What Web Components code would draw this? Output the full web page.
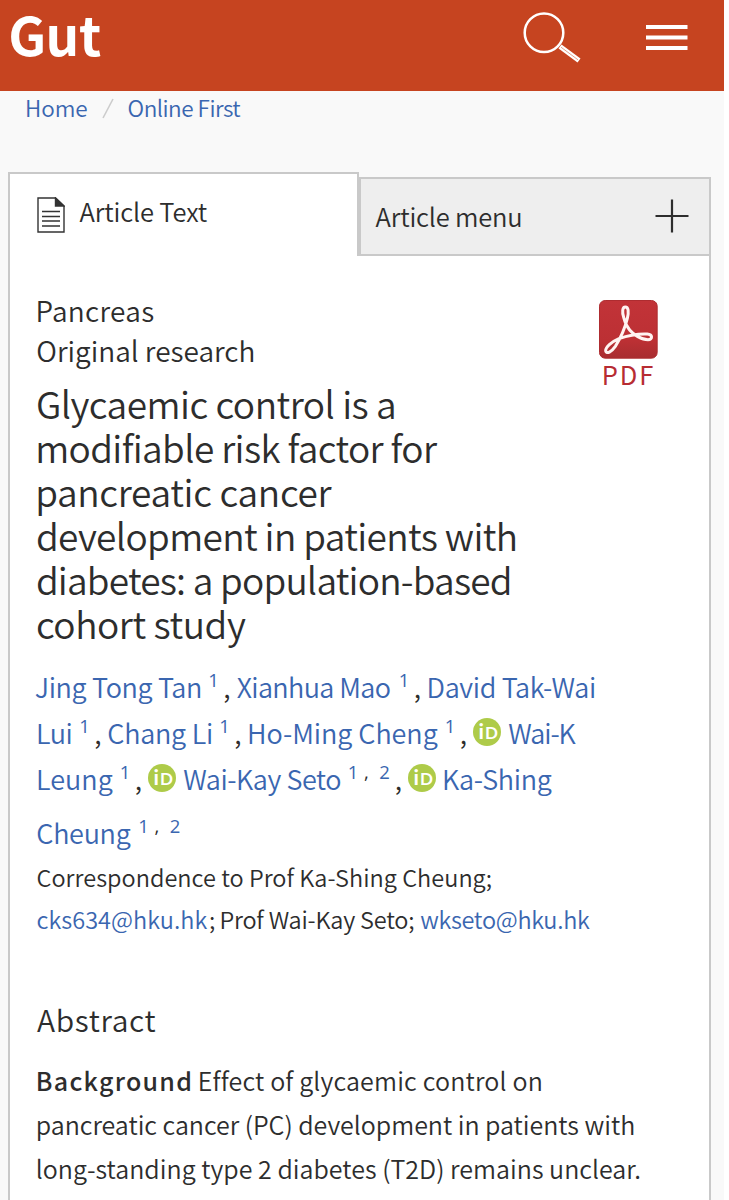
<!DOCTYPE html>
<html lang="en">
<head>
<meta charset="utf-8">
<title>Gut</title>
<style>
  body {
    background: #ffffff;
    color: #2d2d2d;
    font-family: "Noto Sans CJK SC", "Open Sans", sans-serif;
    font-weight: 350;
    margin: 0;
    --link-color: #3a66b0;
    --line-color: #c9c9c9;
  }

  gut-page {
    height: 1200px;
  }

  ink-text[link] {
    color: var( --link-color );
  }
</style>
</head>
<body>
<gut-page>
  <gut-header></gut-header>
  <gut-breadcrumb>
    <ink-text link gap="0.5" w="61">Home</ink-text>
    <ink-text link gap="0.5" w="113">Online First</ink-text>
  </gut-breadcrumb>
  <gut-panel>
    <ink-text slot="active" w="128.5">Article Text</ink-text>
    <ink-text slot="menu" w="146">Article menu</ink-text>
    <gut-pdf slot="aside"></gut-pdf>
    <text-row size="28" line="40"><ink-text gap="0.5" w="116.5">Pancreas</ink-text></text-row>
    <text-row size="28" line="40"><ink-text w="217">Original research</ink-text></text-row>
    <text-row size="37" line="44" before="11"><ink-text w="357.5">Glycaemic control is a</ink-text></text-row>
    <text-row size="37" line="44"><ink-text gap="1" w="400">modifiable risk factor for</ink-text></text-row>
    <text-row size="37" line="44"><ink-text gap="1" w="294.5">pancreatic cancer</ink-text></text-row>
    <text-row size="37" line="44"><ink-text w="479">development in patients with</ink-text></text-row>
    <text-row size="37" line="44"><ink-text w="473">diabetes: a population-based</ink-text></text-row>
    <text-row size="37" line="44"><ink-text w="209">cohort study</ink-text></text-row>

    <text-row size="27" line="46" before="19">
      <ink-text link gap="-2" w="166">Jing Tong Tan</ink-text>
      <ink-text link sup gap="8" w="7">1</ink-text>
      <ink-text gap="8" w="5">,</ink-text>
      <ink-text link gap="7.5" w="154">Xianhua Mao</ink-text>
      <ink-text link sup gap="9" w="7">1</ink-text>
      <ink-text gap="8" w="5">,</ink-text>
      <ink-text link gap="9" w="166.5">David Tak-Wai</ink-text>
    </text-row>
    <text-row size="27" line="46">
      <ink-text link gap="1" w="33.5">Lui</ink-text>
      <ink-text link sup gap="8.5" w="7">1</ink-text>
      <ink-text gap="8" w="5">,</ink-text>
      <ink-text link gap="8" w="104">Chang Li</ink-text>
      <ink-text link sup gap="8" w="7">1</ink-text>
      <ink-text gap="8" w="5">,</ink-text>
      <ink-text link gap="9" w="189">Ho-Ming Cheng</ink-text>
      <ink-text link sup gap="7.5" w="7">1</ink-text>
      <ink-text gap="8" w="5">,</ink-text>
      <orcid-icon></orcid-icon>
      <ink-text link gap="7" w="68.5">Wai-K</ink-text>
    </text-row>
    <text-row size="27" line="46">
      <ink-text link gap="1" w="75">Leung</ink-text>
      <ink-text link sup gap="7.5" w="7">1</ink-text>
      <ink-text gap="8" w="5">,</ink-text>
      <orcid-icon></orcid-icon>
      <ink-text link gap="7" w="158">Wai-Kay Seto</ink-text>
      <ink-text link sup gap="7.5" w="7">1</ink-text>
      <ink-text sup gap="8.5" w="3">,</ink-text>
      <ink-text link sup gap="12.5" w="9">2</ink-text>
      <ink-text gap="7" w="5">,</ink-text>
      <orcid-icon></orcid-icon>
      <ink-text link gap="8" w="108">Ka-Shing</ink-text>
    </text-row>
    <text-row size="27" line="46" before="8">
      <ink-text link w="94">Cheung</ink-text>
      <ink-text link sup gap="8" w="7">1</ink-text>
      <ink-text sup gap="8.5" w="3">,</ink-text>
      <ink-text link sup gap="12.5" w="9">2</ink-text>
    </text-row>

    <text-row size="23.5" line="42"><ink-text w="454.5">Correspondence to Prof Ka-Shing Cheung;</ink-text></text-row>
    <text-row size="23.5" line="42">
      <ink-text link w="171">cks634@hku.hk</ink-text>
      <ink-text gap="1.5" w="4">;</ink-text>
      <ink-text gap="7.5" w="193">Prof Wai-Kay Seto;</ink-text>
      <ink-text link gap="6" w="170.5">wkseto@hku.hk</ink-text>
    </text-row>

    <text-row size="30" line="40" before="59"><ink-text gap="-0.5" w="119.5">Abstract</ink-text></text-row>
    <text-row size="25" line="44" before="19">
      <ink-text strong gap="0.5" w="153">Background</ink-text>
      <ink-text gap="9" w="342">Effect of glycaemic control on</ink-text>
    </text-row>
    <text-row size="25" line="44"><ink-text gap="0.5" w="596.5">pancreatic cancer (PC) development in patients with</ink-text></text-row>
    <text-row size="25" line="44"><ink-text gap="0.5" w="602.5">long-standing type 2 diabetes (T2D) remains unclear.</ink-text></text-row>
  </gut-panel>
</gut-page>

<script>
// Shared setup
class GutElement extends HTMLElement {
  constructor( markup ) {
    super();

    const template = document.createElement( 'template' );
    template.innerHTML = markup;

    this.attachShadow( {mode: 'open'} );
    this.shadowRoot.appendChild( template.content.cloneNode( true ) );
  }
}

const context = document.createElement( 'canvas' ).getContext( '2d' );

// Measure large, scale down
// Bounds of small text are rounded to whole pixels
const MEASURE_SCALE = 16;

// Room at each side for smoothed edges
const EDGE = 0.6;

// A run of text whose inked edges fill the given width
class InkText extends GutElement {
  constructor() {
    super( /* template */ `
      <style>
        :host {
          display: block;
          flex: none;
        }

        :host( [sup] ) {
          font-family: "Open Sans", sans-serif;
          font-size: 18.5px;
          font-weight: 400;
          line-height: 1;
          transform: translateY( -11px );
        }

        :host( [strong] ) {
          font-weight: 500;
        }

        span {
          display: block;
          font-kerning: normal;
          white-space: pre;
        }
      </style>
      <span><slot></slot></span>
    ` );

    this.$run = this.shadowRoot.querySelector( 'span' );
  }

  connectedCallback() {
    this._render();
  }

  _render() {
    const style = getComputedStyle( this );
    const text = this.textContent;
    const width = parseFloat( this.getAttribute( 'w' ) );
    const size = parseFloat( style.fontSize ) * MEASURE_SCALE;

    context.font = `${style.fontWeight} ${size}px ${style.fontFamily}`;
    context.letterSpacing = '0.001px';

    const ink = context.measureText( text );
    const left = ink.actualBoundingBoxLeft / MEASURE_SCALE;
    const natural = left + ink.actualBoundingBoxRight / MEASURE_SCALE;

    this.style.width = `${width}px`;
    this.style.marginLeft = `${this.getAttribute( 'gap' ) || 0}px`;
    this.$run.style.marginLeft = `${left + EDGE}px`;

    if( text.length > 1 ) {
      this.$run.style.letterSpacing = `${( width - EDGE * 2 - natural ) / ( text.length - 1 )}px`;
    }
  }
}

class TextRow extends GutElement {
  constructor() {
    super( /* template */ `
      <style>
        :host {
          align-items: baseline;
          display: flex;
        }
      </style>
      <slot></slot>
    ` );
  }

  connectedCallback() {
    const line = this.getAttribute( 'line' );

    this.style.fontSize = `${this.getAttribute( 'size' )}px`;
    this.style.lineHeight = `${line}px`;
    this.style.height = `${line}px`;
    this.style.marginTop = `${this.getAttribute( 'before' ) || 0}px`;
  }
}

class OrcidIcon extends GutElement {
  constructor() {
    super( /* template */ `
      <style>
        :host {
          align-self: flex-start;
          display: block;
          flex: none;
          height: 28px;
          margin-left: 7.5px;
          margin-top: 8px;
          width: 28px;
        }

        svg {
          display: block;
        }

        text {
          fill: #ffffff;
          font-family: Lato, sans-serif;
          font-weight: 700;
        }
      </style>
      <svg width="28" height="28" viewBox="0 0 28 28">
        <circle cx="14" cy="14" r="14" fill="#aecb49"/>
        <text x="5.6" y="20.6" font-size="21.5">i</text>
        <text x="12" y="20.6" font-size="17">D</text>
      </svg>
    ` );
  }
}

class GutPdf extends GutElement {
  constructor() {
    super( /* template */ `
      <style>
        :host {
          align-items: center;
          color: #b72c33;
          display: flex;
          flex-direction: column;
          font-size: 25.5px;
          font-weight: 400;
          line-height: 30px;
          width: 59px;
        }

        svg {
          display: block;
        }
      </style>
      <svg width="59" height="59" viewBox="0 0 177 177">
        <defs>
          <linearGradient id="red" x1="0" y1="0" x2="0" y2="1">
            <stop offset="0" stop-color="#c23338"/>
            <stop offset="0.7" stop-color="#bc3034"/>
            <stop offset="1" stop-color="#a82d30"/>
          </linearGradient>
        </defs>
        <rect x="1.5" y="1.5" width="173" height="173" rx="17" fill="url(#red)" stroke="#ae2c30" stroke-width="3"/>
        <path d="M79 21C70 21 69 36 74 52C78 67 84 80 92 90C103 104 128 119 147 119C162 119 161 103 145 102C119 101 82 108 60 116C37 126 19 141 20 153C22 164 38 155 49 139C63 117 78 84 85 55C90 34 88 21 79 21Z" fill="none" stroke="#fff3f1" stroke-width="9" stroke-linejoin="round"/>
      </svg>
      <ink-text w="50">PDF</ink-text>
    ` );
  }
}

class GutHeader extends GutElement {
  constructor() {
    super( /* template */ `
      <style>
        :host {
          background: #c64420;
          box-sizing: border-box;
          color: #ffffff;
          display: flex;
          height: 91px;
          padding-left: 10px;
        }

        ink-text {
          font-size: 53px;
          font-weight: 700;
          line-height: 67px;
        }

        svg {
          display: block;
          flex: none;
        }

        .search {
          margin: 10px 0 0 421px;
        }

        .menu {
          margin: 24px 0 0 64px;
        }
      </style>
      <ink-text w="91">Gut</ink-text>
      <svg class="search" width="60" height="56" fill="none" stroke="#fff">
        <circle cx="22" cy="22.7" r="19.3" stroke-width="2.5"/>
        <path d="M38 36.5L57 50.5" stroke-width="5"/>
        <path d="M39 37.2L56 49.8" stroke="#dc8971" stroke-width="0.8"/>
      </svg>
      <svg class="menu" width="42" height="27" fill="#fff">
        <path d="M0 1H41.5V5H0ZM0 11.5H41.5V15.5H0ZM0 22H41.5V26H0Z"/>
      </svg>
    ` );
  }
}

class GutBreadcrumb extends GutElement {
  constructor() {
    super( /* template */ `
      <style>
        :host {
          display: flex;
          font-size: 22.5px;
          height: 81px;
          line-height: 32px;
          padding-left: 26px;
        }

        svg {
          display: block;
          flex: none;
          margin: 7px 14px 0 14px;
          order: 1;
        }

        ::slotted( :last-child ) {
          order: 2;
        }
      </style>
      <slot></slot>
      <svg width="12" height="21"><path d="M1 20L11 1" stroke="#cccccc" stroke-width="1.6"/></svg>
    ` );
  }
}

class GutPanel extends GutElement {
  constructor() {
    super( /* template */ `
      <style>
        :host {
          display: flex;
          flex: 1;
          flex-direction: column;
          margin: 0 13px 0 8px;
        }

        .tabs {
          display: flex;
          font-size: 25.5px;
          height: 84px;
        }

        .active {
          background: #ffffff;
          border: 2px solid var( --line-color );
          border-bottom: 0;
          box-sizing: border-box;
          display: flex;
          line-height: 38px;
          padding: 18px 0 0 27px;
          width: 351px;
        }

        .active svg {
          margin: 5px 14px 0 0;
        }

        .menu {
          background: #eeeeee;
          border: 2px solid var( --line-color );
          box-sizing: border-box;
          display: flex;
          flex: 1;
          justify-content: space-between;
          line-height: 38px;
          margin-top: 5px;
          padding: 18px 20px 0 14px;
        }

        .menu svg {
          margin-top: 2px;
        }

        svg {
          display: block;
          flex: none;
        }

        .body {
          background: #ffffff;
          border: solid var( --line-color );
          border-width: 0 2px;
          display: flex;
          flex: 1;
          justify-content: space-between;
          padding: 34px 51px 0 27px;
        }

        .article {
          width: 0;
        }

        .aside {
          padding-top: 10px;
        }
      </style>
      <div class="tabs">
        <div class="active">
          <svg width="28" height="36" fill="none" stroke="#333" stroke-width="1.4">
            <path d="M1 1H18.5L27 9V35H1Z"/>
            <path d="M18.5 1V9H27Z" fill="#333"/>
            <path d="M5 14.5H23M5 19.5H23M5 24H23M5 29H23"/>
          </svg>
          <slot name="active"></slot>
        </div>
        <div class="menu">
          <slot name="menu"></slot>
          <svg width="34" height="34"><path d="M0.5 17H33.5M17 0.5V33.5" stroke="#2d2d2d" stroke-width="2.2"/></svg>
        </div>
      </div>
      <div class="body">
        <div class="article"><slot></slot></div>
        <div class="aside"><slot name="aside"></slot></div>
      </div>
    ` );
  }
}

class GutPage extends GutElement {
  constructor() {
    super( /* template */ `
      <style>
        :host {
          background: #f9f9f9;
          display: flex;
          flex-direction: column;
          overflow: hidden;
          width: 724px;
        }
      </style>
      <slot></slot>
    ` );
  }
}

window.customElements.define( 'gut-page', GutPage );
window.customElements.define( 'gut-header', GutHeader );
window.customElements.define( 'gut-breadcrumb', GutBreadcrumb );
window.customElements.define( 'gut-panel', GutPanel );
window.customElements.define( 'gut-pdf', GutPdf );
window.customElements.define( 'orcid-icon', OrcidIcon );
window.customElements.define( 'text-row', TextRow );
window.customElements.define( 'ink-text', InkText );
</script>
</body>
</html>
